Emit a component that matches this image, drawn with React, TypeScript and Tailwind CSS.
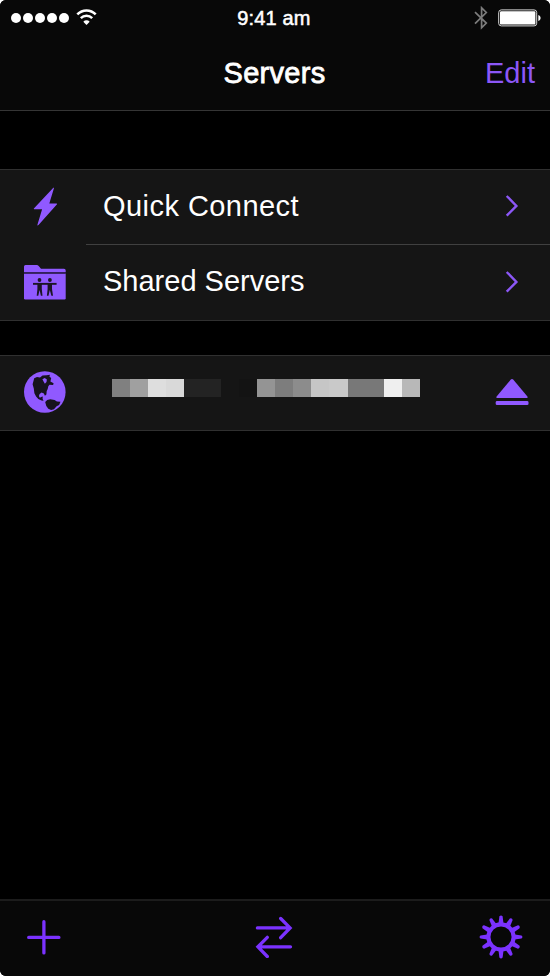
import type { ReactNode } from "react";

function Wifi() {
  return (
    <svg className="ml-[7px] h-4 w-[21px] -translate-y-px" viewBox="0 0 21 16" fill="none" stroke="white">
      <path d="M1.3 5.4C6.5.1 14.5.1 19.7 5.4" strokeWidth="2.6" />
      <path d="M4.8 9.1c3.2-3.2 8.2-3.2 11.4 0" strokeWidth="2.5" />
      <path d="M10.5 16 7.3 12.7c1.8-1.8 4.6-1.8 6.4 0Z" fill="white" stroke="none" />
    </svg>
  );
}

function Bluetooth() {
  return (
    <svg className="h-6 w-4" viewBox="0 0 16 24" fill="none" stroke="#7c7c7c" strokeWidth="1.7">
      <path d="m2 6.2 11.3 10.9L8.6 21.8V1.8l4.7 4.7L2 17.6" />
    </svg>
  );
}

function Battery() {
  return (
    <svg className="ml-[9px] h-[18px] w-[43px]" viewBox="0 0 43 18">
      <rect x=".7" y=".9" width="38" height="16" rx="2.6" fill="none" stroke="#d8d8d8" strokeWidth="1" />
      <rect x="2" y="2.2" width="35.4" height="13.4" rx="1.2" fill="white" />
      <path d="M40.3 6c3 .8 3 5.2 0 6Z" fill="white" />
    </svg>
  );
}

function Bolt() {
  return (
    <svg className="h-[40px] w-[26px]" viewBox="0 0 26 40" fill="#9059ff">
      <path d="M21.1 2.1Q22.2.8 21.8 2.7L17.3 17.6h7.3q1 .1.2 1L6.5 39q-1.5 1.2-1-.5l4.6-15.3H2.2q-.8-.2-.1-1Z" />
    </svg>
  );
}

function SharedFolder() {
  return (
    <svg className="h-[36px] w-[42px]" viewBox="0 0 42 36">
      <path d="M0 8V2.5Q0 1 1.5 1h11.2q1.2 0 2 1L17 4.8h23q1.7 0 1.7 1.7V8Z" fill="#9059ff" />
      <path d="M0 9.6h41.7v24.6q0 1.2-1.2 1.2H1.2Q0 35.4 0 34.2Z" fill="#9059ff" />
      <path d="M0 8h41.7v1.7H0Z" fill="#34205c" />
      <g fill="#1c1526">
        <circle cx="15.5" cy="16" r="1.9" />
        <circle cx="25.9" cy="16" r="1.9" />
        <path d="M9 18.9h23.6v1.9H9Z" />
        <path d="M13.4 19h4.4v6.1l.7 6.6h-1.6l-1.3-5.6-1.3 5.6h-1.6l.7-6.6ZM23.6 19H28v6.1l1 6.6h-1.6l-1.6-5.6-1.3 5.6h-1.6l.7-6.6Z" />
      </g>
    </svg>
  );
}

function Globe() {
  return (
    <svg className="h-[42px] w-[42px]" viewBox="0 0 42 42">
      <circle cx="20.8" cy="21" r="20.8" fill="#9059ff" />
      <path
        fill="#17131e"
        d="M10.2 7.2 13 6l3 .5 2.5-2 4.2-.2 3.2-.6-.4 2 1.7 1.4-.8 3.4 3.2 1.8-.5 1.8-3.6-.3-1.2 1.5-.6 2.6-1 2-.3 3.6-1.5 1.2-1-2.3-2.3-.8-2 1.3-.7 2.2.9 1.6 2-.9 1-.4-.2 2.7 1 1.7-2-.4-3.3-1.5-2.2-2.4-1.7-3.3-.6-4.6-1.2-4.3Z"
      />
      <path d="m18.4 8.3 2.3-1.2 2.2 1.3-.4 2.6-1.6 1.7-1.2-1.9Z" fill="#9059ff" />
      <path
        fill="#17131e"
        d="m21.2 31 2-2 3-.7 4.4.8 2.3 1.4 3.6.3-1.4 3.1-2.5 1.4-2.6 2.9-2.9.8-2.8-1.3-2-2.7Z"
      />
    </svg>
  );
}

function Chevron() {
  return (
    <svg className="mr-[31px] h-6 w-[14px]" viewBox="0 0 14 24" fill="none" stroke="#8c57f7" strokeWidth="2.4">
      <path d="m1.7 2 9.7 9.9-9.7 9.8" />
    </svg>
  );
}

function Eject() {
  return (
    <svg className="mr-[21px] h-7 w-[34px]" viewBox="0 0 34 28" fill="#9059ff">
      <path d="M15.6 1.8q1.4-1.5 2.8 0l14 16.6q1 1.6-.9 1.7h-29q-2-.1-.9-1.7Z" />
      <rect x=".7" y="23.1" width="32.8" height="3.9" rx="1.3" />
    </svg>
  );
}

function Plus() {
  return (
    <svg className="h-9 w-9" viewBox="0 0 36 36" fill="none" stroke="#7b32ff" strokeWidth="3.3" strokeLinecap="round">
      <path d="M17.9 2.7v31.2M2.7 18.4h30.2" />
    </svg>
  );
}

function Transfers() {
  return (
    <svg className="ml-[7px] h-[42px] w-[38px]" viewBox="0 0 38 42" fill="none" stroke="#7b32ff" strokeWidth="3.3" strokeLinecap="round">
      <path d="M2.4 11.9H34.8M25.7 2.5l9.4 9.4-9.4 9.8M35.5 30.8H3.2M12.3 21.3l-9.4 9.5 9.4 9.7" />
    </svg>
  );
}

const TEETH = [0, 30, 60, 90, 120, 150, 180, 210, 240, 270, 300, 330];

function Gear() {
  return (
    <svg className="h-[44px] w-[44px]" viewBox="-22 -22 44 44">
      <circle r="12.6" fill="none" stroke="#7b32ff" strokeWidth="4.1" />
      {TEETH.map((angle) => (
        <path
          key={angle}
          d="M-2.5-13.7-1.6-20.5Q0-22.4 1.6-20.5L2.5-13.7Z"
          fill="#7b32ff"
          transform={`rotate(${angle})`}
        />
      ))}
    </svg>
  );
}

function Row({ icon, accessory, children, className }: { icon: ReactNode; accessory: ReactNode; children: ReactNode; className: string }) {
  return (
    <div className={`flex items-center ${className}`}>
      <div className="flex w-[89px] shrink-0 justify-center">{icon}</div>
      <div className="flex-1 text-white">{children}</div>
      {accessory}
    </div>
  );
}

function HiddenName() {
  return (
    <div className="mb-[7px] ml-[23px] flex h-[18px]">
      <i className="w-[18px] bg-[#808080]" />
      <i className="w-[18px] bg-[#a0a0a0]" />
      <i className="w-[18px] bg-[#dedede]" />
      <i className="w-[18px] bg-[#d9d9d9]" />
      <i className="mr-[18px] w-[37px] bg-[#232323]" />
      <i className="w-[18px] bg-[#131313]" />
      <i className="w-[18px] bg-[#949494]" />
      <i className="w-[18px] bg-[#7d7d7d]" />
      <i className="w-[18px] bg-[#8c8c8c]" />
      <i className="w-[18px] bg-[#c6c6c6]" />
      <i className="w-[19px] bg-[#c9c9c9]" />
      <i className="w-[36px] bg-[#787878]" />
      <i className="w-[18px] bg-[#efefef]" />
      <i className="w-[18px] bg-[#b8b8b8]" />
    </div>
  );
}

export default function App() {
  return (
    <div className="h-[976px] w-[550px] bg-white font-['Liberation_Sans',Arial,sans-serif]">
      <div className="flex h-full flex-col overflow-hidden rounded-[6px] bg-black">
        <header className="h-[111px] shrink-0 border-b border-[#353535] bg-[#080808]">
          <div className="grid h-[35px] grid-cols-3 items-center">
            <div className="flex items-center pl-[11px]">
              <div className="flex gap-[2px]">
                {[0, 1, 2, 3, 4].map((dot) => (
                  <span key={dot} className="h-[10px] w-[10px] rounded-full bg-white" />
                ))}
              </div>
              <Wifi />
            </div>
            <div className="pr-[2px] text-center text-[20px] tracking-[0.15px] text-white [-webkit-text-stroke:0.5px_white]">9:41 am</div>
            <div className="flex items-center justify-end pr-[9px]">
              <Bluetooth />
              <Battery />
            </div>
          </div>
          <div className="grid h-[77px] grid-cols-3 items-center">
            <span />
            <h1 className="pr-px text-center text-[29px] tracking-[0.3px] text-white [-webkit-text-stroke:0.8px_white]">Servers</h1>
            <button className="pr-[15px] text-right text-[29px] text-[#8c57f7]">Edit</button>
          </div>
        </header>

        <section className="mt-[58px] border-y border-[#303030] bg-[#151515]">
          <Row className="h-[75px] pb-1" icon={<Bolt />} accessory={<Chevron />}>
            <div className="ml-[14px] pt-[2px] text-[29px] tracking-[0.45px]">Quick Connect</div>
          </Row>
          <div className="-mt-px ml-[86px] h-px bg-[#404040]" />
          <Row className="h-[75px] pb-[2px]" icon={<SharedFolder />} accessory={<Chevron />}>
            <div className="ml-[14px] text-[29px]">Shared Servers</div>
          </Row>
        </section>

        <section className="mt-[34px] border-y border-[#303030] bg-[#151515]">
          <Row className="h-[74px] pb-[3px]" icon={<Globe />} accessory={<Eject />}>
            <HiddenName />
          </Row>
        </section>

        <footer className="mt-auto flex h-[77px] items-center justify-between border-t-2 border-[#1c1c1c] bg-[#080808] pb-[3px] pl-[26px] pr-[27px]">
          <Plus />
          <Transfers />
          <Gear />
        </footer>
      </div>
    </div>
  );
}
